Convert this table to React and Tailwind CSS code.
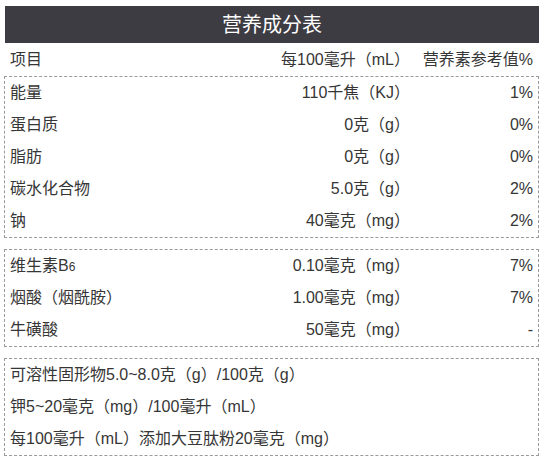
import React from "react";

const main = [
  ["能量", "110千焦（KJ）", "1%"],
  ["蛋白质", "0克（g）", "0%"],
  ["脂肪", "0克（g）", "0%"],
  ["碳水化合物", "5.0克（g）", "2%"],
  ["钠", "40毫克（mg）", "2%"],
];

const vitamins = [
  [<>维生素B<span className="text-[12px]">6</span></>, "0.10毫克（mg）", "7%"],
  ["烟酸（烟酰胺）", "1.00毫克（mg）", "7%"],
  ["牛磺酸", "50毫克（mg）", "-"],
];

const notes = [
  "可溶性固形物5.0~8.0克（g）/100克（g）",
  "钾5~20毫克（mg）/100毫升（mL）",
  "每100毫升（mL）添加大豆肽粉20毫克（mg）",
];

function Row({ name, value, pct }) {
  return (
    <div className="flex items-center h-[32px] pl-[5px] pr-[5px]">
      <div className="flex-1">{name}</div>
      <div className="text-right">{value}</div>
      <div className="w-[123px] text-right">{pct}</div>
    </div>
  );
}

function Box({ children, className = "" }) {
  return (
    <div className={`border border-dashed border-[#9a9a9a] ${className}`}>{children}</div>
  );
}

export default function App() {
  return (
    <div
      className="w-[545px] h-[462px] bg-white pt-[6px] pl-[4px] pr-[6px] text-[16px] text-[#363636] overflow-hidden"
      style={{ fontFamily: '"Liberation Sans", "Noto Sans CJK SC", sans-serif' }}
    >
      <div className="ml-[1px] h-[37px] bg-[#3e3c43] text-white text-[20px] flex items-center justify-center">
        营养成分表
      </div>

      <div className="flex items-center h-[33px] pl-[6px] pr-[6px]">
        <div className="flex-1">项目</div>
        <div className="text-right">每100毫升（mL）</div>
        <div className="w-[123px] text-right">营养素参考值%</div>
      </div>

      <Box>
        {main.map((r) => (
          <Row key={r[0]} name={r[0]} value={r[1]} pct={r[2]} />
        ))}
      </Box>

      <Box className="mt-[11px]">
        {vitamins.map((r, i) => (
          <Row key={i} name={r[0]} value={r[1]} pct={r[2]} />
        ))}
      </Box>

      <Box className="mt-[11px]">
        {notes.map((n) => (
          <div key={n} className="flex items-center h-[32px] pl-[5px]">
            {n}
          </div>
        ))}
      </Box>
    </div>
  );
}
